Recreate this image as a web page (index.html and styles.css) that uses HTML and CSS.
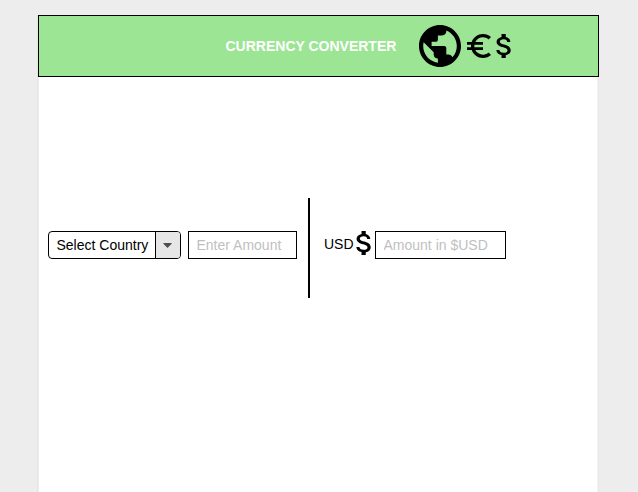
FILE: index.html
```html
<!DOCTYPE html>
<html lang="en">
<head>
<meta charset="utf-8">
<title>Currency Converter</title>
<link rel="stylesheet" href="styles.css">
</head>
<body>
<div class="page">
  <header class="header">
    <h1 class="title">CURRENCY CONVERTER</h1>
    <svg class="globe" viewBox="2 2 20 20"><path d="M12 2C6.48 2 2 6.48 2 12s4.48 10 10 10 10-4.48 10-10S17.52 2 12 2zm-1 17.93c-3.95-.49-7-3.85-7-7.93 0-.62.08-1.21.21-1.79L9 15v1c0 1.1.9 2 2 2v1.93zm6.9-2.54c-.26-.81-1-1.39-1.9-1.39h-1v-3c0-.55-.45-1-1-1H8v-2h2c.55 0 1-.45 1-1V7h2c1.1 0 2-.9 2-2v-.41c2.93 1.19 5 4.06 5 7.41 0 2.08-.8 3.97-2.1 5.39z"/></svg>
    <svg class="euro" viewBox="3 3 18 18"><path d="M15 18.5c-2.51 0-4.68-1.42-5.76-3.5H15v-2H8.58c-.05-.33-.08-.66-.08-1s.03-.67.08-1H15V9H9.24C10.32 6.92 12.5 5.5 15 5.5c1.61 0 3.09.59 4.23 1.57L21 5.3C19.41 3.87 17.3 3 15 3c-3.92 0-7.24 2.51-8.48 6H3v2h3.06c-.04.33-.06.66-.06 1s.02.67.06 1H3v2h3.52c1.24 3.49 4.56 6 8.48 6 2.31 0 4.41-.87 6-2.3l-1.78-1.77c-1.13.98-2.6 1.57-4.22 1.57z"/></svg>
    <svg class="dollar" viewBox="6.1 3 10.6 18" preserveAspectRatio="none"><path d="M11.8 10.9c-2.27-.59-3-1.2-3-2.15 0-1.09 1.01-1.85 2.7-1.85 1.78 0 2.44.85 2.5 2.1h2.21c-.07-1.72-1.12-3.3-3.21-3.81V3h-3v2.16c-1.94.42-3.5 1.68-3.5 3.61 0 2.31 1.91 3.46 4.7 4.13 2.5.6 3 1.48 3 2.41 0 .69-.49 1.79-2.7 1.79-2.06 0-2.87-.92-2.98-2.1h-2.2c.12 2.19 1.76 3.42 3.68 3.83V21h3v-2.15c1.95-.37 3.5-1.5 3.5-3.55 0-2.84-2.43-3.81-4.7-4.4z"/></svg>
  </header>
  <main class="converter">
    <button class="select" type="button">
      <span class="select-label">Select Country</span>
      <span class="select-arrow"><svg class="caret" viewBox="0 0 9 5"><path d="M.8 0h7.4q.8 0 .4.7L5 4.6q-.5.5-1 0L.4.7Q0 0 .8 0z"/></svg></span>
    </button>
    <input class="field amount" type="text" placeholder="Enter Amount">
    <div class="divider"></div>
    <span class="unit">USD</span>
    <svg class="dollar result-icon" viewBox="6.1 3 10.6 18" preserveAspectRatio="none"><path d="M11.8 10.9c-2.27-.59-3-1.2-3-2.15 0-1.09 1.01-1.85 2.7-1.85 1.78 0 2.44.85 2.5 2.1h2.21c-.07-1.72-1.12-3.3-3.21-3.81V3h-3v2.16c-1.94.42-3.5 1.68-3.5 3.61 0 2.31 1.91 3.46 4.7 4.13 2.5.6 3 1.48 3 2.41 0 .69-.49 1.79-2.7 1.79-2.06 0-2.87-.92-2.98-2.1h-2.2c.12 2.19 1.76 3.42 3.68 3.83V21h3v-2.15c1.95-.37 3.5-1.5 3.5-3.55 0-2.84-2.43-3.81-4.7-4.4z"/></svg>
    <input class="field result" type="text" placeholder="Amount in $USD">
  </main>
</div>
</body>
</html>
```
FILE: styles.css
```css
* { box-sizing: border-box; }
body {
  margin: 0;
  padding: 15px 39px 0 38px;
  height: 492px;
  overflow: hidden;
  background: #ededed;
  font-family: "Liberation Sans", Arial, sans-serif;
  font-size: 14px;
  color: #000;
}
svg { display: block; flex: none; }
.page {
  height: 477px;
  background: linear-gradient(#ececec, #ececec) left / 1px 100% no-repeat,
    linear-gradient(90deg, #f5f5f5 50%, #e9e9e9 50%) right / 2px 100% no-repeat, #fff;
  box-shadow: -1px 0 0 #e6e6e6;
}
.header {
  display: flex;
  align-items: center;
  height: 62px;
  padding-left: 186.5px;
  border: 1px solid #000;
  background: #9be594;
}
.title {
  width: 193.5px;
  margin: 0;
  font-size: 14px;
  line-height: 16px;
  color: #fff;
  white-space: nowrap;
}
.globe { width: 42px; height: 42px; }
.euro { width: 24px; height: 24px; margin-left: 6px; }
.dollar { width: 15px; height: 24px; }
.header .dollar { margin-left: 5px; }
.converter {
  display: flex;
  align-items: center;
  height: 100px;
  margin-top: 121px;
  padding: 0 10px;
}
.select {
  display: flex;
  width: 133px;
  height: 28px;
  margin: 0;
  margin-top: -6px;
  padding: 0;
  border: 1px solid #000;
  border-radius: 4px;
  overflow: hidden;
  background: #fff;
  font: inherit;
  line-height: 26px;
  color: #000;
}
.select-label { width: 106px; padding-left: 7.5px; text-align: left; white-space: nowrap; }
.select-arrow {
  display: flex;
  align-items: center;
  justify-content: center;
  width: 25px;
  height: 26px;
  border-left: 1px solid #000;
  background: #e6e6e6;
}
.caret { width: 9px; height: 5px; margin-right: 1px; fill: #4d4d4d; }
.field {
  height: 28px;
  margin: -6px 0 0;
  padding: 0 7.5px;
  border: 1px solid #000;
  border-radius: 0;
  background: #fff;
  font: inherit;
}
.field::placeholder { color: #bfbfbf; opacity: 1; }
.amount { width: 109px; margin-left: 7px; }
.divider { width: 2px; height: 100px; margin-left: 11px; background: #000; }
.unit { width: 30px; margin: -8px 0 0 14px; line-height: 16px; }
.result-icon { margin: -10px 0 0 2px; }
.result { width: 131px; margin-left: 4px; }
```
